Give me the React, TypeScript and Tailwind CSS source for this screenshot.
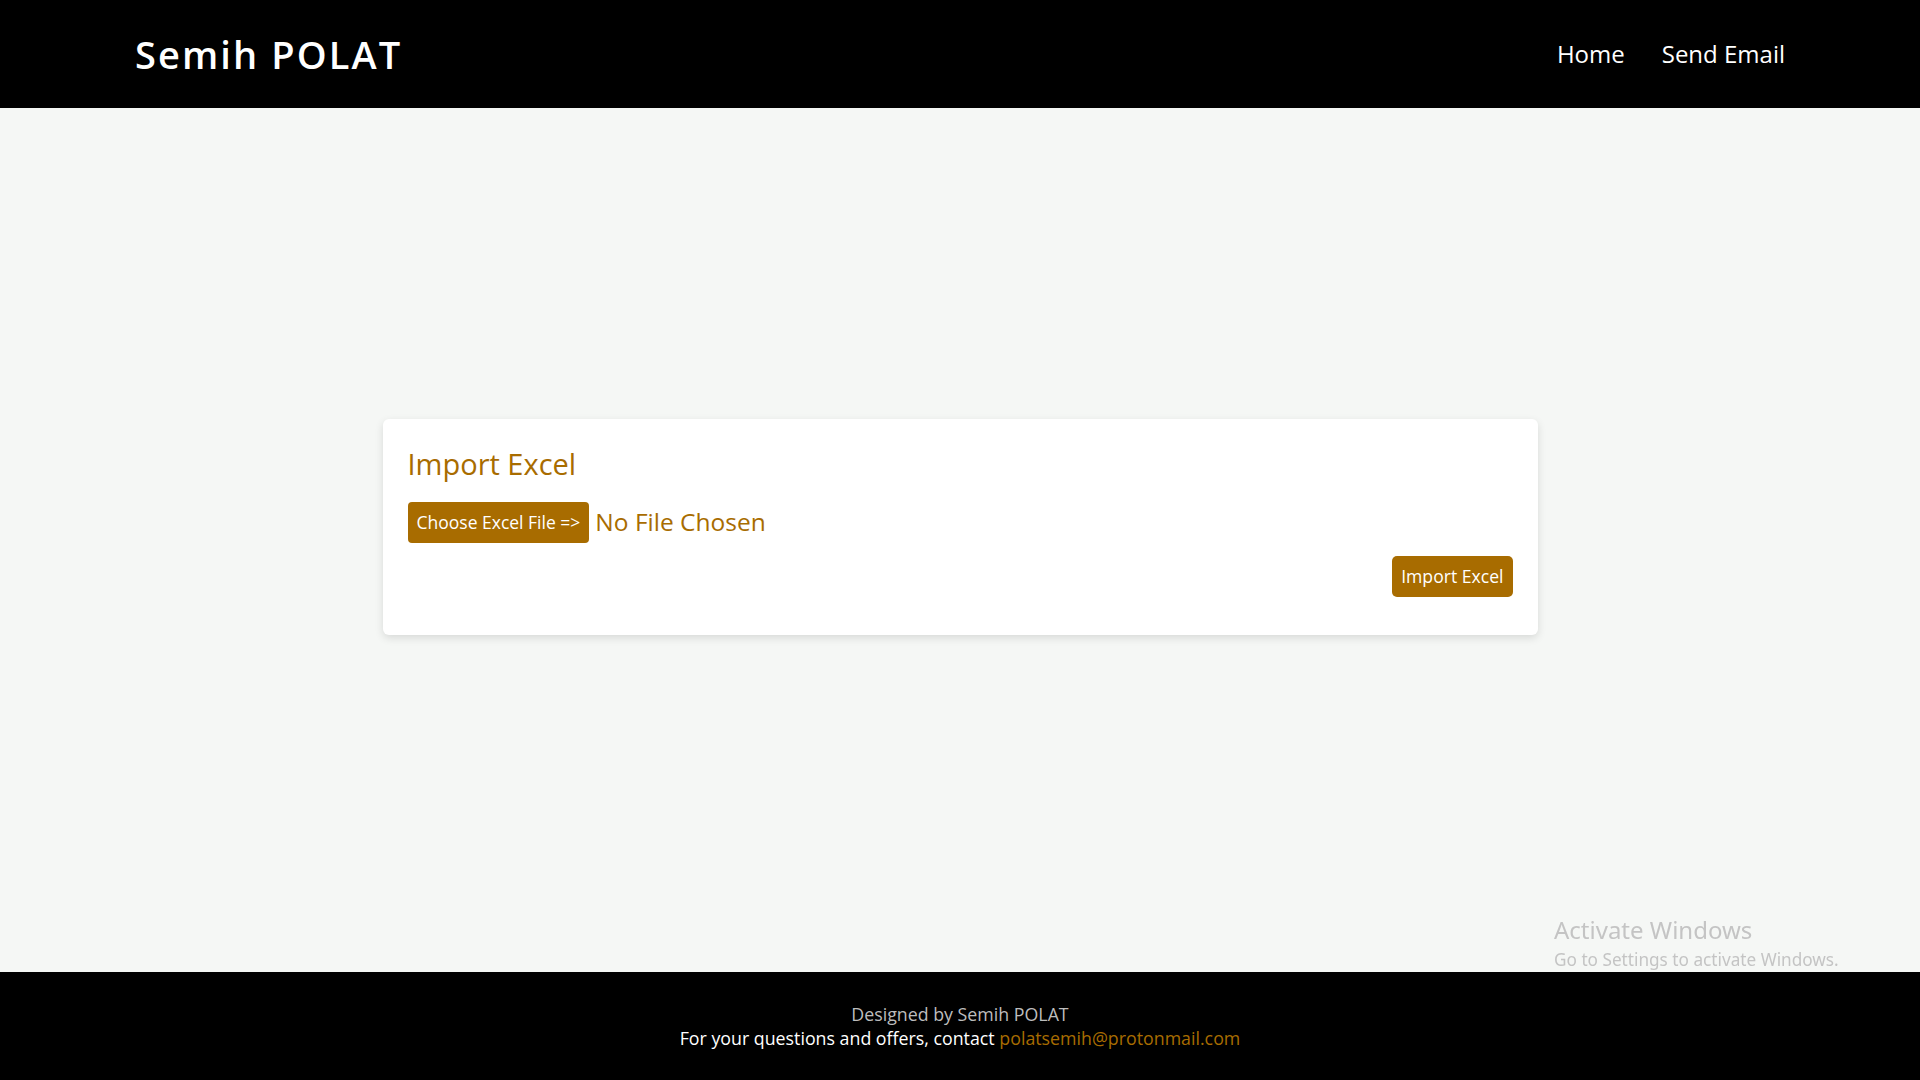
export default function App() {
  return (
    <div className="min-h-screen flex flex-col bg-[#f5f7f5] font-['Open_Sans',sans-serif]">
      {/* Header */}
      <header className="h-[108px] bg-black flex items-center justify-between px-[135px] shrink-0">
        <a href="#" className="text-white text-[38px] font-semibold tracking-[2.1px] leading-none">
          Semih POLAT
        </a>
        <nav className="flex items-center gap-[37px] text-white text-[24px]">
          <a href="#">Home</a>
          <a href="#">Send Email</a>
        </nav>
      </header>

      {/* Main */}
      <main className="flex-1 flex items-center justify-center pb-[26px]">
        <div className="w-[1155px] bg-white rounded-[6px] shadow-[0_3px_8px_rgba(0,0,0,0.12)] px-[25px] pt-[28px] pb-[38px]">
          <h2 className="text-[29px] font-medium text-[#a86c00] leading-[1.2]">Import Excel</h2>
          <div className="mt-[20px] flex items-center gap-[6px]">
            <label className="h-[41px] px-[9px] bg-[#a86c00] text-white text-[17.5px] rounded-[4px] flex items-center cursor-pointer">
              Choose Excel File =&gt;
            </label>
            <span className="text-[24.5px] text-[#a86c00] leading-none">No File Chosen</span>
          </div>
          <div className="mt-[13px] flex justify-end">
            <button className="h-[41px] px-[9px] bg-[#a86c00] text-white text-[17.6px] rounded-[5px]">
              Import Excel
            </button>
          </div>
        </div>
      </main>

      {/* Footer */}
      <footer className="h-[108px] bg-black flex flex-col items-center justify-center text-[17.8px] leading-[24px] shrink-0">
        <p className="text-[#bdbdbd]">Designed by Semih POLAT</p>
        <p className="text-white">
          For your questions and offers, contact{" "}
          <a href="#" className="text-[#a86c00]">polatsemih@protonmail.com</a>
        </p>
      </footer>

      {/* OS watermark overlay */}
      <div className="fixed left-[1554px] top-[915px] pointer-events-none text-[#c4c4c4] font-['Noto_Sans',sans-serif]">
        <div className="text-[24px] leading-[30px]">Activate Windows</div>
        <div className="text-[17.2px] leading-[22px] mt-[4px]">Go to Settings to activate Windows.</div>
      </div>
    </div>
  );
}
